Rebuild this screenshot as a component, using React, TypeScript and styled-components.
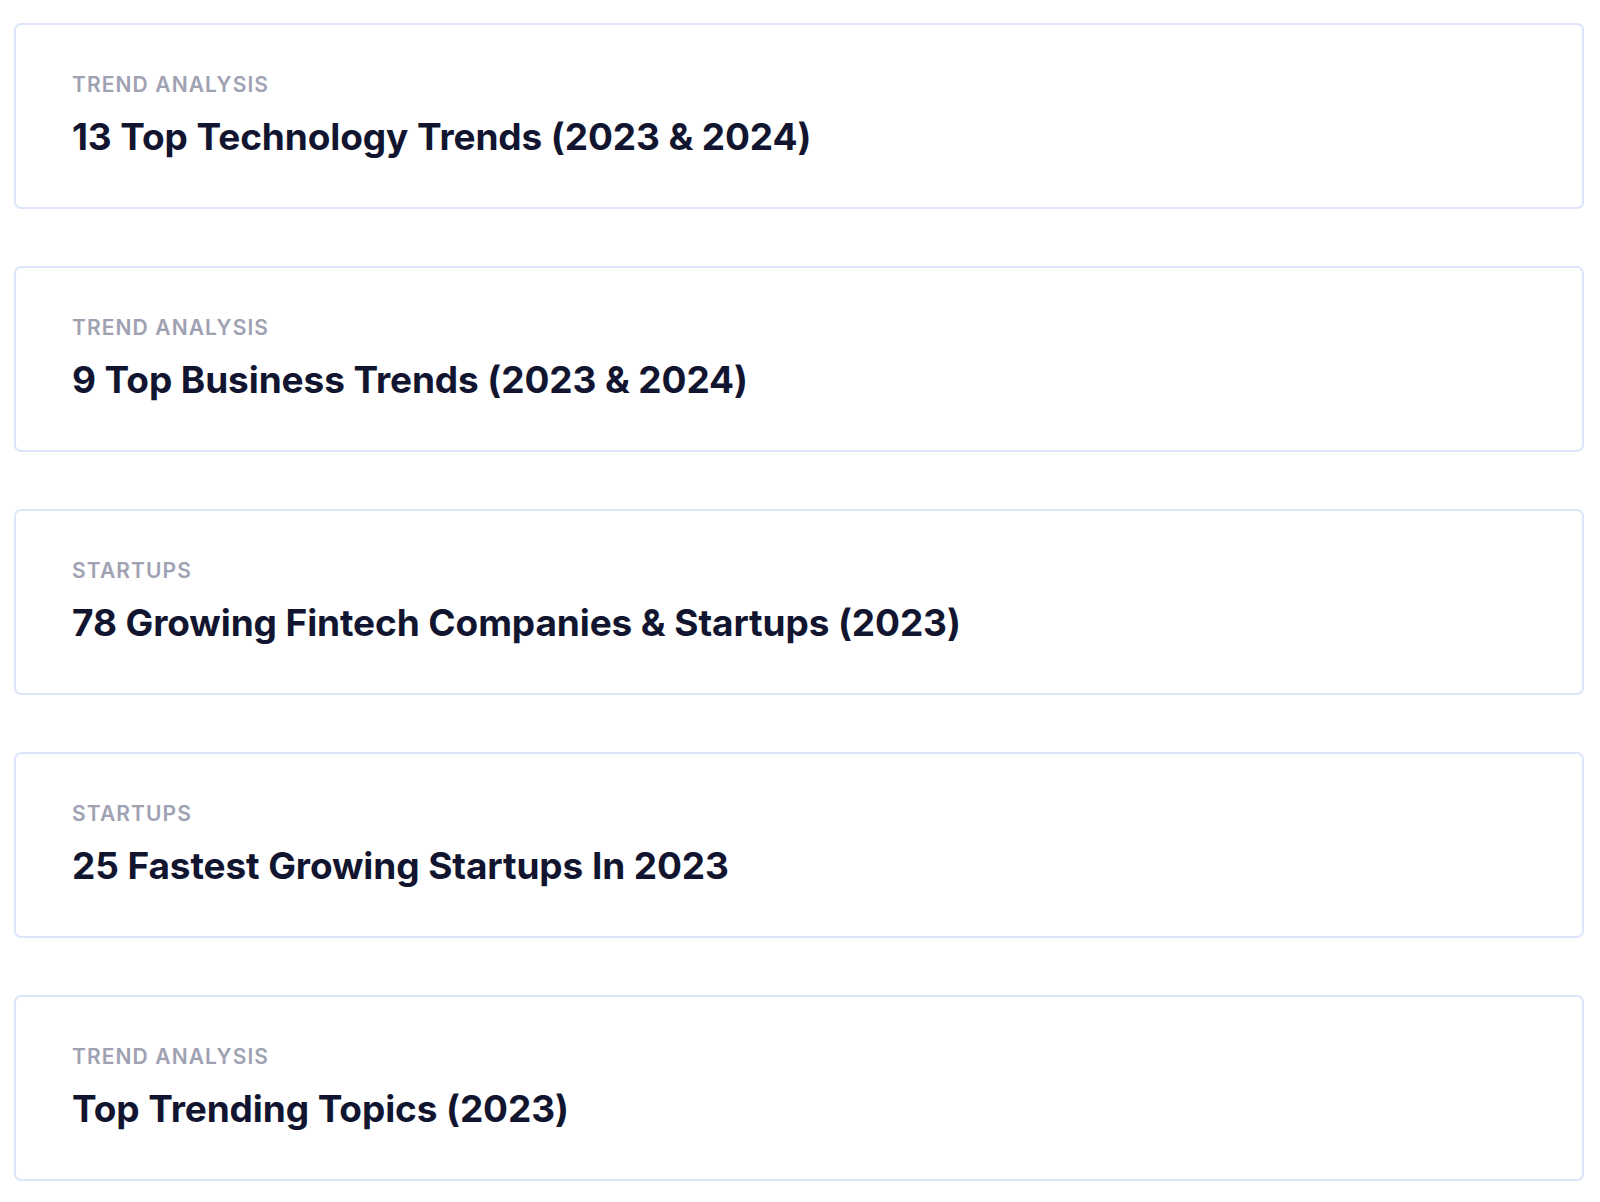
import React from 'react';
import styled, { createGlobalStyle } from 'styled-components';

const GlobalStyle = createGlobalStyle`
    html, body {
        margin: 0;
        padding: 0;
        background: #ffffff;
    }
    body {
        font-family: Inter, "Noto Sans", "Liberation Sans", sans-serif;
        -webkit-font-smoothing: antialiased;
    }
`;

const List = styled.div`
    display: flex;
    flex-direction: column;
    gap: 57px;
    padding: 23px 16px 20px 14px;
`;

const Card = styled.a`
    display: flex;
    flex-direction: column;
    justify-content: center;
    height: 186px;
    box-sizing: border-box;
    padding: 0 56px;
    border: 2px solid #dce5f9;
    border-radius: 7px;
    background: #ffffff;
    text-decoration: none;
`;

const Category = styled.span`
    font-size: 21px;
    font-weight: 600;
    letter-spacing: 1.1px;
    line-height: 24px;
    color: #9fa2b3;
    text-transform: uppercase;
`;

const Title = styled.h3`
    margin: 18px 0 0;
    font-size: 37px;
    font-weight: 700;
    line-height: 44px;
    letter-spacing: -0.1px;
    color: #121530;
`;

interface Article {
    category: string;
    title: string;
}

const articles: Article[] = [
    { category: 'Trend Analysis', title: '13 Top Technology Trends (2023 & 2024)' },
    { category: 'Trend Analysis', title: '9 Top Business Trends (2023 & 2024)' },
    { category: 'Startups', title: '78 Growing Fintech Companies & Startups (2023)' },
    { category: 'Startups', title: '25 Fastest Growing Startups In 2023' },
    { category: 'Trend Analysis', title: 'Top Trending Topics (2023)' },
];

const App: React.FC = () => {
    return (
        <>
            <GlobalStyle />
            <List>
                {articles.map((article) => (
                    <Card key={article.title} href="#">
                        <Category>{article.category}</Category>
                        <Title>{article.title}</Title>
                    </Card>
                ))}
            </List>
        </>
    );
}

export default App;
